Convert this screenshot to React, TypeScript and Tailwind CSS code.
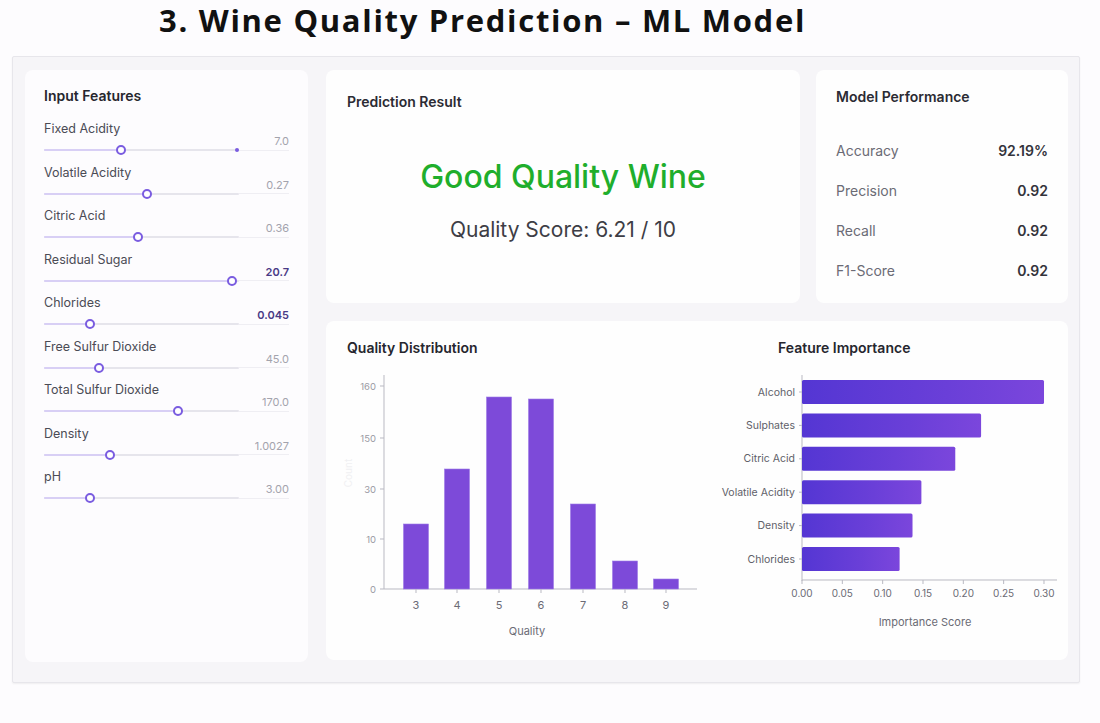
import React from "react";

type Feature = {
  label: string;
  value: string;
  pos: number; // thumb centre, px from track start
  strong?: boolean;
  endDot?: boolean;
};

const FEATURES: Feature[] = [
  { label: "Fixed Acidity", value: "7.0", pos: 77, endDot: true },
  { label: "Volatile Acidity", value: "0.27", pos: 103 },
  { label: "Citric Acid", value: "0.36", pos: 94 },
  { label: "Residual Sugar", value: "20.7", pos: 188, strong: true },
  { label: "Chlorides", value: "0.045", pos: 46, strong: true },
  { label: "Free Sulfur Dioxide", value: "45.0", pos: 55 },
  { label: "Total Sulfur Dioxide", value: "170.0", pos: 134 },
  { label: "Density", value: "1.0027", pos: 66 },
  { label: "pH", value: "3.00", pos: 46 },
];

const METRICS = [
  { label: "Accuracy", value: "92.19%" },
  { label: "Precision", value: "0.92" },
  { label: "Recall", value: "0.92" },
  { label: "F1-Score", value: "0.92" },
];

// quality -> bar top (svg y), bottom is 228
const QUALITY = [
  { q: "3", x: 90, top: 163 },
  { q: "4", x: 131, top: 108 },
  { q: "5", x: 173, top: 36 },
  { q: "6", x: 215, top: 38 },
  { q: "7", x: 257, top: 143 },
  { q: "8", x: 299, top: 200 },
  { q: "9", x: 340, top: 218 },
];

const IMPORTANCE = [
  { name: "Alcohol", score: 0.3 },
  { name: "Sulphates", score: 0.222 },
  { name: "Citric Acid", score: 0.19 },
  { name: "Volatile Acidity", score: 0.148 },
  { name: "Density", score: 0.137 },
  { name: "Chlorides", score: 0.121 },
];

function SliderRow({ f }: { f: Feature }) {
  return (
    <div className="flex h-[43.5px] flex-col">
      <div className="flex items-start justify-between">
        <span className="text-[12.5px] leading-4 text-[#4b4b55]">{f.label}</span>
        <span
          className={
            f.strong
              ? "mt-3 text-[11px] leading-4 font-semibold text-[#4a3a86]"
              : "mt-3 text-[11px] leading-4 text-[#a3a3ad]"
          }
        >
          {f.value}
        </span>
      </div>
      <div className="flex h-[2px] items-center">
        <div className="relative h-[2px] w-[195px] rounded bg-[#e6e5ec]">
          <div
            className="absolute left-0 top-0 h-[2px] rounded bg-[#d8cff5]"
            style={{ width: f.pos }}
          />
          <div
            className="absolute top-1/2 h-[10px] w-[10px] -translate-x-1/2 -translate-y-1/2 rounded-full border-2 border-[#7a5ce0] bg-white"
            style={{ left: f.pos }}
          />
          {f.endDot && (
            <div className="absolute right-[0px] top-1/2 h-[4px] w-[4px] -translate-y-1/2 rounded-full bg-[#7a5ce0]" />
          )}
        </div>
        <div className="h-[1px] flex-1 bg-[#efeef3]" />
      </div>
    </div>
  );
}

function QualityChart() {
  const yTicks = [
    { y: 25, t: "160" },
    { y: 77, t: "150" },
    { y: 128, t: "30" },
    { y: 178, t: "10" },
    { y: 228, t: "0" },
  ];
  return (
    <svg width="372" height="290" viewBox="0 0 372 290" className="mt-[3px] block">
      <text
        x="26"
        y="112"
        fontSize="10"
        fill="#c8c8d0"
        textAnchor="middle"
        transform="rotate(-90 26 112)"
        opacity="0.25"
      >
        Count
      </text>
      <line x1="58" y1="14" x2="58" y2="228" stroke="#b9b9c2" strokeWidth="1" />
      <line x1="58" y1="228" x2="371" y2="228" stroke="#b9b9c2" strokeWidth="1" />
      {yTicks.map((t) => (
        <g key={t.t}>
          <line x1="54" y1={t.y} x2="58" y2={t.y} stroke="#b9b9c2" />
          <text x="50" y={t.y + 3.5} fontSize="9.5" fill="#9a9aa4" textAnchor="end">
            {t.t}
          </text>
        </g>
      ))}
      {QUALITY.map((b) => (
        <g key={b.q}>
          <rect
            x={b.x - 12.5}
            y={b.top}
            width="25"
            height={228 - b.top}
            fill="#7d4ad9"
            stroke="#9d7ae6"
            strokeWidth="0.6"
          />
          <line x1={b.x} y1="228" x2={b.x} y2="232" stroke="#b9b9c2" />
          <text x={b.x} y="248" fontSize="11" fill="#6b6b75" textAnchor="middle">
            {b.q}
          </text>
        </g>
      ))}
      <text x="201" y="274" fontSize="11" fill="#6b6b75" textAnchor="middle">
        Quality
      </text>
    </svg>
  );
}

function ImportanceChart() {
  const x0 = 104;
  const scale = 806.7;
  const ticks = ["0.00", "0.05", "0.10", "0.15", "0.20", "0.25", "0.30"];
  return (
    <svg width="370" height="290" viewBox="0 0 370 290" className="mt-[3px] block">
      <defs>
        <linearGradient id="impBar" x1="0" y1="0" x2="1" y2="0">
          <stop offset="0" stopColor="#5436d3" />
          <stop offset="0.6" stopColor="#6a3fd8" />
          <stop offset="1" stopColor="#7b46dc" />
        </linearGradient>
      </defs>
      <line x1={x0} y1="14" x2={x0} y2="220" stroke="#b9b9c2" />
      <line x1={x0} y1="219" x2="359" y2="219" stroke="#b9b9c2" />
      {IMPORTANCE.map((d, i) => {
        const cy = 31 + i * 33.4;
        return (
          <g key={d.name}>
            <rect
              x={x0}
              y={cy - 12}
              width={d.score * scale}
              height="24"
              rx="1.5"
              fill="url(#impBar)"
            />
            <line x1={x0 - 3} y1={cy} x2={x0} y2={cy} stroke="#b9b9c2" />
            <text x={x0 - 7} y={cy + 3.5} fontSize="10.5" fill="#5f5f69" textAnchor="end">
              {d.name}
            </text>
          </g>
        );
      })}
      {ticks.map((t, i) => {
        const x = x0 + i * 40.33;
        return (
          <g key={t}>
            <line x1={x} y1="219" x2={x} y2="223" stroke="#b9b9c2" />
            <text x={x} y="236" fontSize="10" fill="#6b6b75" textAnchor="middle">
              {t}
            </text>
          </g>
        );
      })}
      <text x="227" y="265" fontSize="11" fill="#6b6b75" textAnchor="middle">
        Importance Score
      </text>
    </svg>
  );
}

export default function App() {
  return (
    <div className="min-h-[723px] w-[1100px] bg-[#fdfcfe] font-['Inter',sans-serif]">
      <h1 className="pl-[159px] pt-0 font-['Open_Sans',sans-serif] text-[31px] font-bold leading-[40px] tracking-[1.7px] text-[#111]">
        3. Wine Quality Prediction – ML Model
      </h1>

      <div className="ml-3 mt-4 w-[1068px] rounded-[2px] border border-[#e7e6eb] bg-[#f6f5f8] px-[12px] pb-[20px] pt-[13px] shadow-[0_1px_2px_rgba(0,0,0,0.06)]">
        <div className="grid grid-cols-[283px_742px] gap-[18px]">
          {/* left: inputs */}
          <div className="h-[592px] rounded-lg bg-[#fdfcfe] px-[19px] pt-[16px]">
            <h2 className="text-[14px] font-semibold leading-5 text-[#26262e]">Input Features</h2>
            <div className="mt-[15px]">
              {FEATURES.map((f) => (
                <SliderRow key={f.label} f={f} />
              ))}
            </div>
          </div>

          {/* right */}
          <div className="flex flex-col gap-[18px]">
            <div className="flex h-[233px] gap-4">
              <div className="flex w-[474px] flex-col rounded-lg bg-[#fefefe]">
                <div className="px-[21px] pt-[22px] text-[14px] font-semibold leading-5 text-[#2b2b33]">
                  Prediction Result
                </div>
                <div className="mt-[45px] text-center text-[32px] font-medium leading-10 text-[#1fae2c]">
                  Good Quality Wine
                </div>
                <div className="mt-[19px] text-center text-[21px] leading-7 text-[#3d3d45]">
                  Quality Score: 6.21 / 10
                </div>
              </div>
              <div className="flex flex-1 flex-col rounded-lg bg-[#fefefe] px-5">
                <div className="pt-[17px] text-[14px] font-semibold leading-5 text-[#2b2b33]">
                  Model Performance
                </div>
                <div className="mt-[23px] flex flex-col">
                  {METRICS.map((m) => (
                    <div key={m.label} className="flex h-10 items-center justify-between">
                      <span className="text-[14px] text-[#6b6b75]">{m.label}</span>
                      <span className="text-[14px] font-semibold text-[#33333b]">{m.value}</span>
                    </div>
                  ))}
                </div>
              </div>
            </div>

            <div className="flex h-[339px] rounded-lg bg-[#fefefe]">
              <div className="flex w-[372px] flex-col">
                <div className="px-[21px] pt-[17px] text-[14px] font-semibold leading-5 text-[#26262e]">
                  Quality Distribution
                </div>
                <QualityChart />
              </div>
              <div className="flex flex-1 flex-col">
                <div className="pl-[80px] pt-[17px] text-[14px] font-semibold leading-5 text-[#26262e]">
                  Feature Importance
                </div>
                <ImportanceChart />
              </div>
            </div>
          </div>
        </div>
      </div>
    </div>
  );
}
